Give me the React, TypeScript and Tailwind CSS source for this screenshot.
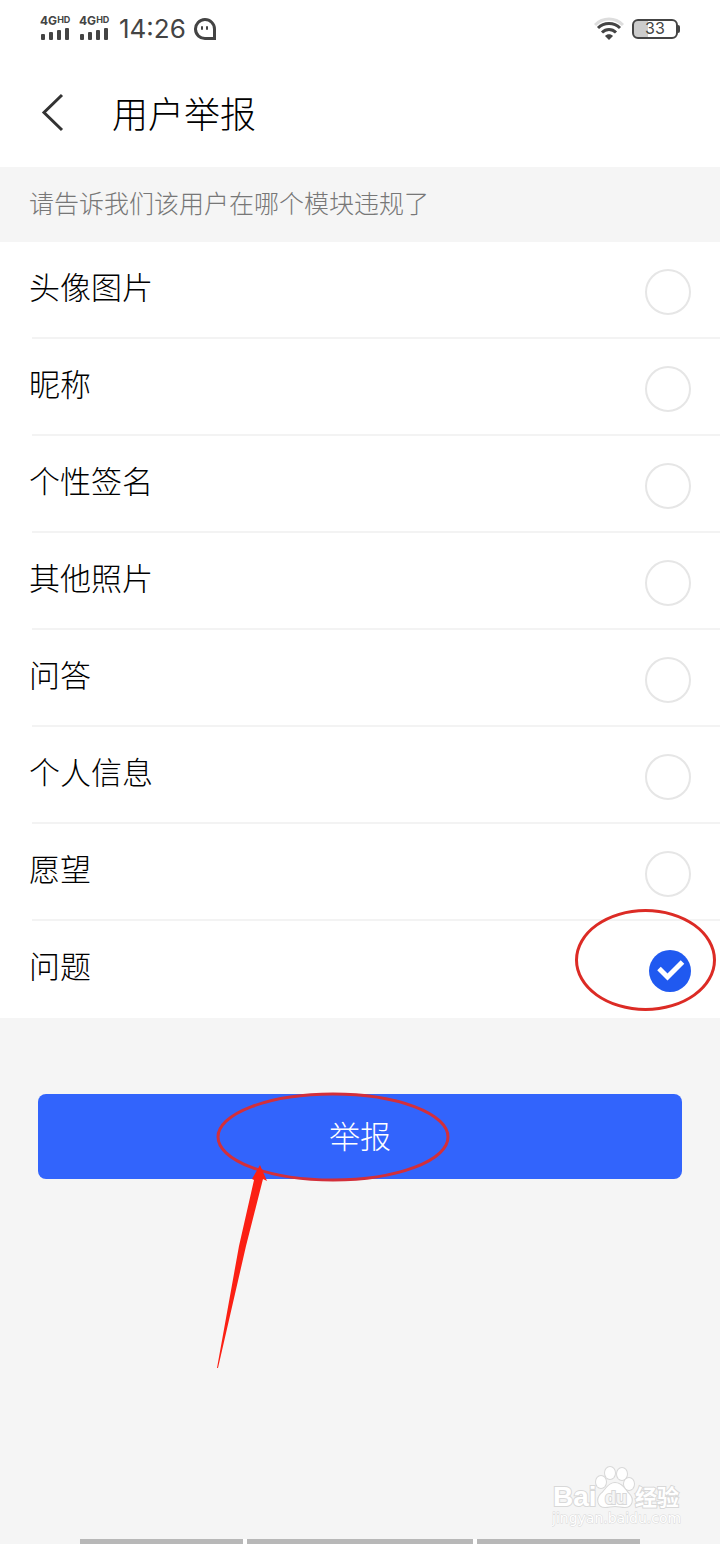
import React, { useState } from "react";

const modules = [
  "头像图片",
  "昵称",
  "个性签名",
  "其他照片",
  "问答",
  "个人信息",
  "愿望",
  "问题",
];

const Signal = () => (
  <div className="flex w-8 flex-col">
    <div className="flex items-start font-[Inter] font-bold leading-none">
      <span className="text-xs leading-3">4G</span>
      <span className="text-[9px] leading-[9px]">HD</span>
    </div>
    <svg width="32" height="14" viewBox="0 0 32 14" fill="#444" aria-hidden="true">
      <rect x="1" y="7" width="4" height="6" rx="1" />
      <rect x="9" y="5" width="4" height="8" rx="1" />
      <rect x="17" y="3" width="4" height="10" rx="1" />
      <rect x="25" y="1" width="4" height="12" rx="1" />
    </svg>
  </div>
);

const StatusBar = () => (
  <div className="flex h-[57px] items-center justify-between pb-1 pl-10 pr-10 text-[#444]">
    <div className="flex items-center">
      <div className="flex gap-[7px] pt-[2px]">
        <Signal />
        <Signal />
      </div>
      <span className="ml-2 pt-1 font-[Inter] text-[26px] font-normal leading-8">14:26</span>
      <svg className="ml-2 mt-1" width="24" height="24" viewBox="0 0 24 24" fill="none" aria-hidden="true">
        <path
          d="M20.500 21.500H11.500A9.500 9.500 0 1 1 20.500 12V21.500Z"
          stroke="#444"
          strokeWidth="3"
        />
        <rect x="7" y="9" width="2" height="4" rx="1" fill="#444" />
        <rect x="12" y="9" width="2" height="4" rx="1" fill="#444" />
      </svg>
    </div>
    <div className="flex items-center gap-2 pt-1">
      <svg width="30" height="24" viewBox="0 0 30 24" fill="none" aria-hidden="true">
        <path d="M1 8C9 0 21 0 29 8" stroke="#ddd" strokeWidth="3" />
        <path d="M4 11C10 5 20 5 26 11" stroke="#444" strokeWidth="3" />
        <path d="M8 15.500C12 11.500 18 11.500 22 15.500" stroke="#444" strokeWidth="3" />
        <path d="M11 19C13 16.500 17 16.500 19 19L15 23Z" fill="#444" />
      </svg>
      <div className="flex items-center">
        <div className="flex h-5 w-[46px] items-center justify-center rounded-md border-2 border-[#444] bg-linear-to-r from-[#ccc] from-33% to-white to-33% pb-px font-[Inter] text-base font-normal leading-none">
          33
        </div>
        <div className="h-2 w-[2px] rounded-r-sm bg-[#444]" />
      </div>
    </div>
  </div>
);

const ModuleRow = ({
  label,
  checked,
  marked,
  last,
  onSelect,
}: {
  label: string;
  checked: boolean;
  marked: boolean;
  last: boolean;
  onSelect: () => void;
}) => {
  return (
    <label className="relative block cursor-pointer">
      <div className="flex h-[95px] items-center justify-between px-[29px]">
        <span className="pb-2 text-[31px] leading-10 text-black">{label}</span>
        <span className="mt-1 grid items-center justify-items-end">
          <input
            type="radio"
            name="module"
            checked={checked}
            onChange={onSelect}
            className="col-start-1 row-start-1 size-[46px] appearance-none rounded-full border-2 border-[#e6e6e6] checked:size-[42px] checked:border-0 checked:bg-[#2059f0]"
          />
          {checked && (
            <svg
              className="pointer-events-none col-start-1 row-start-1"
              width="42"
              height="42"
              viewBox="0 0 42 42"
              fill="none"
              aria-hidden="true"
            >
              <path d="M10 18.500L18.500 27L33.500 12" stroke="white" strokeWidth="5" />
            </svg>
          )}
        </span>
      </div>
      <div className={`ml-8 h-[2px] ${last ? "" : "bg-[#f3f3f3]"}`} />
      {marked && (
        <span className="pointer-events-none absolute right-1 -top-3 h-[102px] w-[141px] rounded-[50%] border-3 border-[#dc2b25]" />
      )}
    </label>
  );
};

const Watermark = () => (
  <svg
    width="134"
    height="66"
    viewBox="0 0 134 66"
    fill="#fff"
    stroke="#d8d8d8"
    strokeWidth="2"
    paintOrder="stroke"
    fontFamily="'Liberation Sans', 'Noto Sans CJK SC', sans-serif"
    role="img"
    aria-label="Baidu 经验"
  >
    <text x="1" y="41" fontSize="28" fontWeight="700">
      Bai
    </text>
    <ellipse cx="49" cy="17" rx="5" ry="6" />
    <ellipse cx="58" cy="8" rx="5" ry="6" />
    <ellipse cx="70" cy="9" rx="5" ry="6" />
    <ellipse cx="77" cy="19" rx="5" ry="6" />
    <path d="M63 18C70 18 73 25 77 29C82 34 80 42 73 42C69 42 67 41 63 41C59 41 57 42 53 42C46 42 44 34 49 29C54 25 56 18 63 18Z" />
    <text x="53" y="39" fontSize="18" fontWeight="700" fill="#f5f5f5">
      du
    </text>
    <text x="83" y="40" fontSize="22" fontWeight="700">
      经验
    </text>
    <text
      x="0"
      y="58"
      fontSize="14"
      fontWeight="400"
      strokeWidth="1"
      fontFamily="'DejaVu Sans', sans-serif"
    >
      jingyan.baidu.com
    </text>
  </svg>
);

const App = () => {
  const [selected, setSelected] = useState("问题");

  return (
    <div className="flex min-h-screen flex-col bg-[#f5f5f5] font-['Noto_Sans_CJK_SC',sans-serif] font-light">
      <header className="bg-white">
        <StatusBar />
        <div className="flex h-[110px] items-center pl-10">
          <button type="button" aria-label="返回">
            <svg width="24" height="40" viewBox="0 0 24 40" fill="none">
              <path d="M22 3L4 20.500L22 38" stroke="#333" strokeWidth="3" />
            </svg>
          </button>
          <h1 className="ml-12 text-4xl font-light text-black">用户举报</h1>
        </div>
      </header>

      <main>
        <p className="flex h-[75px] items-center pb-1 pl-[29px] text-[25px] text-[#777]">
          请告诉我们该用户在哪个模块违规了
        </p>

        {/* Module list */}
        <div className="bg-white">
          {modules.map((label, index) => (
            <ModuleRow
              key={label}
              label={label}
              checked={selected === label}
              marked={label === "问题"}
              last={index === modules.length - 1}
              onSelect={() => setSelected(label)}
            />
          ))}
        </div>

        {/* Submit */}
        <div className="relative mx-[38px] mt-[76px]">
          <button
            type="button"
            className="h-[85px] w-full rounded-lg bg-[#3264fc] pb-[2px] text-[31px] text-white"
          >
            举报
          </button>
          <svg
            className="pointer-events-none absolute left-[178px] -top-[3px]"
            width="234"
            height="280"
            viewBox="0 0 234 280"
            fill="none"
            aria-hidden="true"
          >
            <ellipse cx="117" cy="46" rx="115" ry="43" stroke="#d32f3a" strokeWidth="3" />
            <path
              d="M44 74L36 88L38 89L23 155L1 277L2 277L30 155L47 88L51 90Z"
              fill="#fb2014"
            />
          </svg>
        </div>
      </main>

      <footer className="mt-auto">
        <div className="flex justify-end pb-2 pr-[34px]">
          <Watermark />
        </div>
        <div className="flex h-[5px] gap-1 bg-white bg-clip-content px-20">
          <div className="flex-[163] bg-[#b8b8b8]" />
          <div className="flex-[226] bg-[#b8b8b8]" />
          <div className="flex-[163] bg-[#b8b8b8]" />
        </div>
      </footer>
    </div>
  );
};

export default App;
